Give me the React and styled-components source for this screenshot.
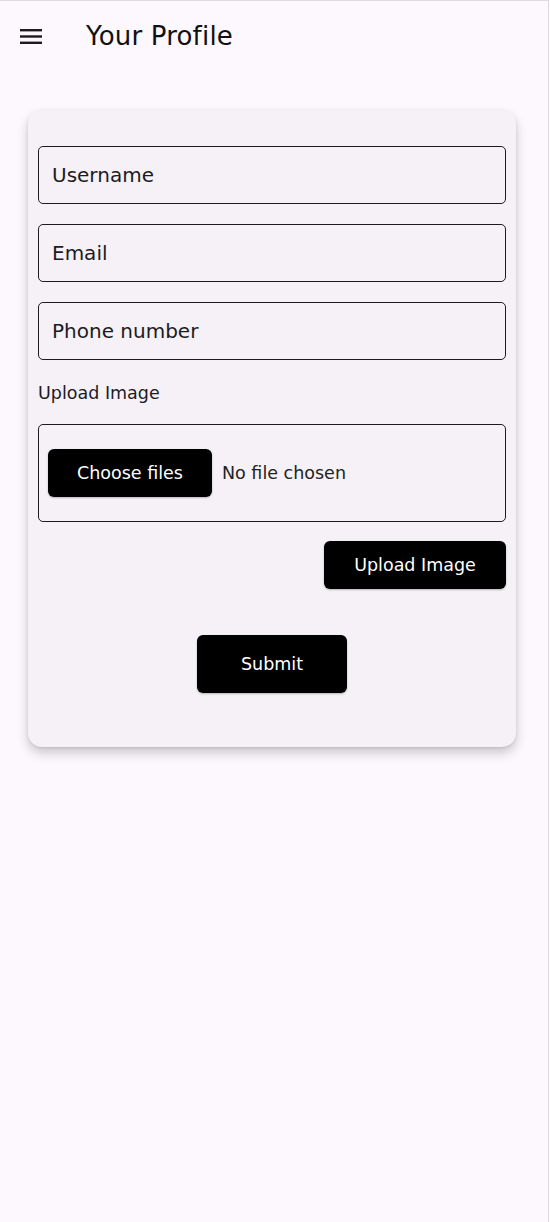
import React from "react";
import styled, { createGlobalStyle } from "styled-components";

const GlobalStyle = createGlobalStyle`
  html, body {
    margin: 0;
    padding: 0;
    background: #fdf8fd;
  }
  * {
    box-sizing: border-box;
  }
`;

const Screen = styled.div`
  width: 549px;
  min-height: 1222px;
  background: #fdf8fd;
  border-top: 1px solid #dcdbe0;
  border-right: 1px solid #dcdbe0;
  font-family: "DejaVu Sans", "Noto Sans", sans-serif;
  color: #1c1b1f;
`;

const Header = styled.header`
  height: 70px;
  display: flex;
  align-items: center;
  padding: 0 0 0 19px;
  gap: 43px;
`;

const MenuButton = styled.button`
  background: transparent;
  border: none;
  padding: 0;
  width: 24px;
  height: 24px;
  display: flex;
  align-items: center;
  justify-content: center;
  cursor: pointer;
  color: #1c1b1f;
`;

const Title = styled.h1`
  margin: 0;
  font-size: 26px;
  font-weight: 400;
  letter-spacing: 0.2px;
  color: #111;
`;

const Card = styled.form`
  margin: 39px 0 0 28px;
  width: 488px;
  background: #f5f1f7;
  border-radius: 14px;
  padding: 36px 10px 54px;
  box-shadow: 0 6px 12px rgba(0, 0, 0, 0.2), 0 1px 3px rgba(0, 0, 0, 0.1);
  display: flex;
  flex-direction: column;
`;

const Field = styled.input`
  width: 100%;
  height: 58px;
  border: 1px solid #1c1b1f;
  border-radius: 5px;
  background: transparent;
  padding: 0 13px;
  font-family: inherit;
  font-size: 20px;
  color: #1c1b1f;
  margin-bottom: ${({ $last }) => ($last ? "0" : "20px")};
  outline: none;

  &::placeholder {
    color: #1c1b1f;
    opacity: 1;
  }
`;

const Label = styled.div`
  margin-top: 22px;
  font-size: 17.5px;
  color: #1c1b1f;
  line-height: 22px;
`;

const FileBox = styled.div`
  margin-top: 20px;
  height: 98px;
  border: 1px solid #1c1b1f;
  border-radius: 5px;
  display: flex;
  align-items: center;
  padding: 0 9px;
  gap: 10px;
`;

const BlackButton = styled.button`
  background: #000;
  color: #fff;
  border: none;
  border-radius: 6px;
  font-family: inherit;
  font-size: 17.5px;
  width: ${({ $w }) => $w}px;
  height: ${({ $h }) => $h}px;
  cursor: pointer;
  box-shadow: 0 1px 2px rgba(0, 0, 0, 0.25);
  display: flex;
  align-items: center;
  justify-content: center;
`;

const FileName = styled.span`
  font-size: 17.5px;
  color: #222;
`;

const UploadRow = styled.div`
  margin-top: 19px;
  display: flex;
  justify-content: flex-end;
`;

const SubmitRow = styled.div`
  margin-top: 46px;
  display: flex;
  justify-content: center;
`;

function MenuIcon() {
  return (
    <svg width="24" height="24" viewBox="0 0 24 24" fill="currentColor">
      <rect x="1" y="5" width="22" height="2.4" />
      <rect x="1" y="11.3" width="22" height="2.4" />
      <rect x="1" y="17.6" width="22" height="2.4" />
    </svg>
  );
}

export default function App() {
  return (
    <>
      <GlobalStyle />
      <Screen>
        <Header>
          <MenuButton aria-label="Open menu">
            <MenuIcon />
          </MenuButton>
          <Title>Your Profile</Title>
        </Header>

        <Card onSubmit={(e) => e.preventDefault()}>
          <Field placeholder="Username" />
          <Field placeholder="Email" />
          <Field placeholder="Phone number" $last />

          <Label>Upload Image</Label>
          <FileBox>
            <BlackButton type="button" $w={164} $h={48}>
              Choose files
            </BlackButton>
            <FileName>No file chosen</FileName>
          </FileBox>

          <UploadRow>
            <BlackButton type="button" $w={182} $h={48}>
              Upload Image
            </BlackButton>
          </UploadRow>

          <SubmitRow>
            <BlackButton type="submit" $w={150} $h={58}>
              Submit
            </BlackButton>
          </SubmitRow>
        </Card>
      </Screen>
    </>
  );
}
